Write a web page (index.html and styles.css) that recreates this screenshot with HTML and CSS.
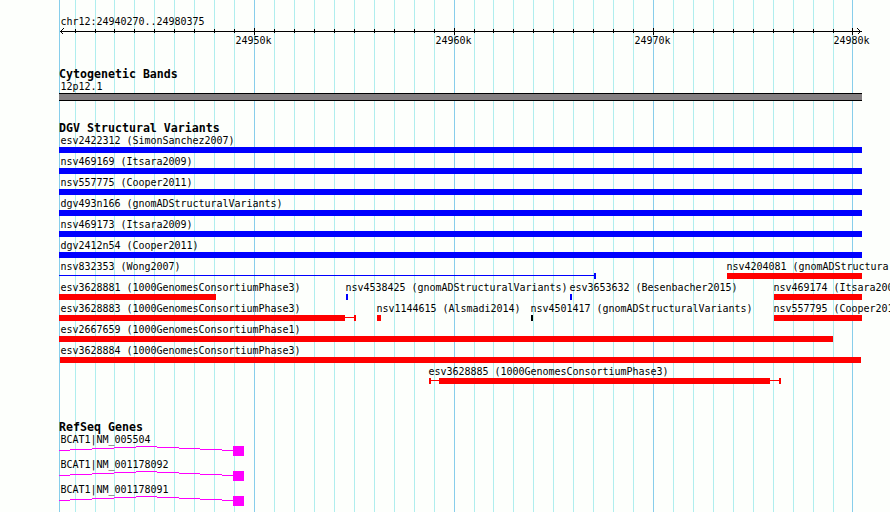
FILE: index.html
```
<!DOCTYPE html>
<html lang="en">
<head>
<meta charset="utf-8">
<title>chr12:24940270..24980375</title>
<link rel="stylesheet" href="styles.css">
</head>
<body>
<svg class="gridlines" width="890" height="512" shape-rendering="crispEdges" aria-hidden="true">
  <path class="minor" d="M75.5 0V512M95.5 0V512M114.5 0V512M134.5 0V512M154.5 0V512M174.5 0V512M194.5 0V512M214.5 0V512M234.5 0V512M274.5 0V512M294.5 0V512M314.5 0V512M334.5 0V512M354.5 0V512M374.5 0V512M394.5 0V512M414.5 0V512M434.5 0V512M474.5 0V512M493.5 0V512M513.5 0V512M533.5 0V512M553.5 0V512M573.5 0V512M593.5 0V512M613.5 0V512M633.5 0V512M673.5 0V512M693.5 0V512M713.5 0V512M733.5 0V512M753.5 0V512M773.5 0V512M793.5 0V512M813.5 0V512M833.5 0V512"/>
  <path class="major" d="M59.5 0V512M254.5 0V512M454.5 0V512M653.5 0V512M852.5 0V512"/>
</svg>
<main class="browser">
  <header class="scale">
    <div class="label">chr12:24940270..24980375</div>
    <svg class="axis" width="803" height="7" viewBox="59 27 803 7" shape-rendering="crispEdges">
      <path d="M60 31.5H862M75.5 29V33M95.5 29V33M114.5 29V33M134.5 29V33M154.5 29V33M174.5 29V33M194.5 29V33M214.5 29V33M234.5 29V33M274.5 29V33M294.5 29V33M314.5 29V33M334.5 29V33M354.5 29V33M374.5 29V33M394.5 29V33M414.5 29V33M434.5 29V33M474.5 29V33M493.5 29V33M513.5 29V33M533.5 29V33M553.5 29V33M573.5 29V33M593.5 29V33M613.5 29V33M633.5 29V33M673.5 29V33M693.5 29V33M713.5 29V33M733.5 29V33M753.5 29V33M773.5 29V33M793.5 29V33M813.5 29V33M833.5 29V33"/>
      <path d="M254.5 28V35M454.5 28V35M653.5 28V35M852.5 28V35"/>
      <path d="M63.5 28.5L60.5 31.5L63.5 34.5M857.5 28.5L860.5 31.5L857.5 34.5"/>
    </svg>
    <div class="stack">
      <span class="label" style="margin-left:175px">24950k</span>
      <span class="label" style="margin-left:375px">24960k</span>
      <span class="label" style="margin-left:574px">24970k</span>
      <span class="label" style="margin-left:773px">24980k</span>
    </div>
  </header>

  <section class="track cytoband">
    <h2>Cytogenetic Bands</h2>
    <div class="label">12p12.1</div>
    <div class="band"></div>
  </section>

  <section class="track variants">
    <h2>DGV Structural Variants</h2>
    <div class="rows">
      <div class="stack"><div class="feature gain"><span class="label">esv2422312 (SimonSanchez2007)</span><i class="bar" style="width:803px"></i></div></div>
      <div class="stack"><div class="feature gain"><span class="label">nsv469169 (Itsara2009)</span><i class="bar" style="width:803px"></i></div></div>
      <div class="stack"><div class="feature gain"><span class="label">nsv557775 (Cooper2011)</span><i class="bar" style="width:803px"></i></div></div>
      <div class="stack"><div class="feature gain"><span class="label">dgv493n166 (gnomADStructuralVariants)</span><i class="bar" style="width:803px"></i></div></div>
      <div class="stack"><div class="feature gain"><span class="label">nsv469173 (Itsara2009)</span><i class="bar" style="width:803px"></i></div></div>
      <div class="stack"><div class="feature gain"><span class="label">dgv2412n54 (Cooper2011)</span><i class="bar" style="width:803px"></i></div></div>
      <div class="stack">
        <div class="feature gain"><span class="label">nsv832353 (Wong2007)</span><div class="glyph"><i class="line" style="width:535px"></i><i class="cap"></i></div></div>
        <div class="feature loss" style="margin-left:668px"><span class="label flush">nsv4204081 (gnomADStructura</span><i class="bar" style="width:135px"></i></div>
      </div>
      <div class="stack">
        <div class="feature loss"><span class="label">esv3628881 (1000GenomesConsortiumPhase3)</span><i class="bar" style="width:157px"></i></div>
        <div class="feature gain" style="margin-left:287px"><span class="label flush">nsv4538425 (gnomADStructuralVariants)</span><i class="bar" style="width:2px"></i></div>
        <div class="feature gain" style="margin-left:511px"><span class="label flush">esv3653632 (Besenbacher2015)</span><i class="bar" style="width:2px"></i></div>
        <div class="feature loss" style="margin-left:715px"><span class="label flush">nsv469174 (Itsara200</span><i class="bar" style="width:88px"></i></div>
      </div>
      <div class="stack">
        <div class="feature loss"><span class="label">esv3628883 (1000GenomesConsortiumPhase3)</span><div class="glyph"><i class="bar" style="width:286px"></i><i class="line" style="width:9px"></i><i class="cap"></i></div></div>
        <div class="feature loss" style="margin-left:318px"><span class="label flush">nsv1144615 (Alsmadi2014)</span><i class="bar" style="width:4px"></i></div>
        <div class="feature other" style="margin-left:472px"><span class="label flush">nsv4501417 (gnomADStructuralVariants)</span><i class="bar" style="width:2px"></i></div>
        <div class="feature loss" style="margin-left:715px"><span class="label flush">nsv557795 (Cooper201</span><i class="bar" style="width:88px"></i></div>
      </div>
      <div class="stack"><div class="feature loss"><span class="label">esv2667659 (1000GenomesConsortiumPhase1)</span><i class="bar" style="width:774px"></i></div></div>
      <div class="stack"><div class="feature loss" style="margin-left:1px"><span class="label flush-in">esv3628884 (1000GenomesConsortiumPhase3)</span><i class="bar" style="width:801px"></i></div></div>
      <div class="stack"><div class="feature loss" style="margin-left:370px"><span class="label flush">esv3628885 (1000GenomesConsortiumPhase3)</span><div class="glyph"><i class="cap"></i><i class="line" style="width:8px"></i><i class="bar" style="width:331px"></i><i class="line" style="width:9px"></i><i class="cap"></i></div></div></div>
    </div>
  </section>

  <svg class="symbols" width="0" height="0" aria-hidden="true">
    <symbol id="gene" viewBox="0 0 185 12">
      <path d="M0 5h11v1H0zM11 4h22v1H11zM33 3h22v1H33zM55 2h22v1H55zM77 1h21v1H77zM98 2h22v1H98zM120 3h21v1h-21zM141 4h22v1h-22zM163 5h11v1h-11zM174 1h11v10h-11z"/>
    </symbol>
  </svg>
  <section class="track genes">
    <h2>RefSeq Genes</h2>
    <div class="gene"><div class="label">BCAT1|NM_005504</div><svg width="185" height="12"><use href="#gene"/></svg></div>
    <div class="gene"><div class="label">BCAT1|NM_001178092</div><svg width="185" height="12"><use href="#gene"/></svg></div>
    <div class="gene"><div class="label">BCAT1|NM_001178091</div><svg width="185" height="12"><use href="#gene"/></svg></div>
  </section>
</main>
</body>
</html>
```

FILE: styles.css
```
* { box-sizing: border-box; }

body {
  margin: 0;
  width: 890px;
  height: 512px;
  overflow: hidden;
  background: #fdfffc;
  color: #000;
  font-family: "DejaVu Sans Mono", monospace;
}

.gridlines { position: absolute; top: 0; left: 0; z-index: -1; }
.minor { stroke: #afeeee; }
.major { stroke: #87ceeb; }

.browser {
  display: flex;
  flex-direction: column;
  padding: 15px 0 0 59px;
}

.label {
  display: block;
  margin-left: 1px;
  font-size: 10px;
  line-height: 14px;
  height: 12px;
  letter-spacing: -0.02px;
  text-indent: 0.4px;
  white-space: nowrap;
}
.label.flush { margin-left: -1px; }
.label.flush-in { margin-left: 0; }

h2 {
  margin: 0;
  font-size: 11.6px;
  line-height: 15px;
  height: 13px;
  font-weight: bold;
  letter-spacing: 0.01px;
  white-space: nowrap;
}

.stack { display: grid; grid-template-columns: minmax(0, 1fr); }
.stack > * { grid-area: 1 / 1; }

.axis { display: block; overflow: visible; stroke: #000; fill: none; }
.scale .stack { padding-left: 1px; }

.cytoband { margin-top: 21px; }
.band {
  width: 803px;
  height: 8px;
  margin-top: 1px;
  background: #848082;
  border: solid #000;
  border-width: 1px 0;
}

.variants { margin-top: 20px; }
.rows { display: flex; flex-direction: column; gap: 2px; }
.feature { display: flex; flex-direction: column; gap: 1px; }
.gain { --tone: #00f; }
.loss { --tone: #f00; }
.other { --tone: #000; }
.glyph { display: flex; height: 6px; }
.bar { display: block; height: 6px; background: var(--tone); }
.cap { width: 2px; height: 6px; background: var(--tone); }
.line { height: 1px; margin-top: 2px; background: var(--tone); }

.symbols { display: block; height: 0; }
.genes { margin-top: 36px; }
.gene { height: 25px; }
.gene svg { display: block; fill: #f0f; shape-rendering: crispEdges; }
```
